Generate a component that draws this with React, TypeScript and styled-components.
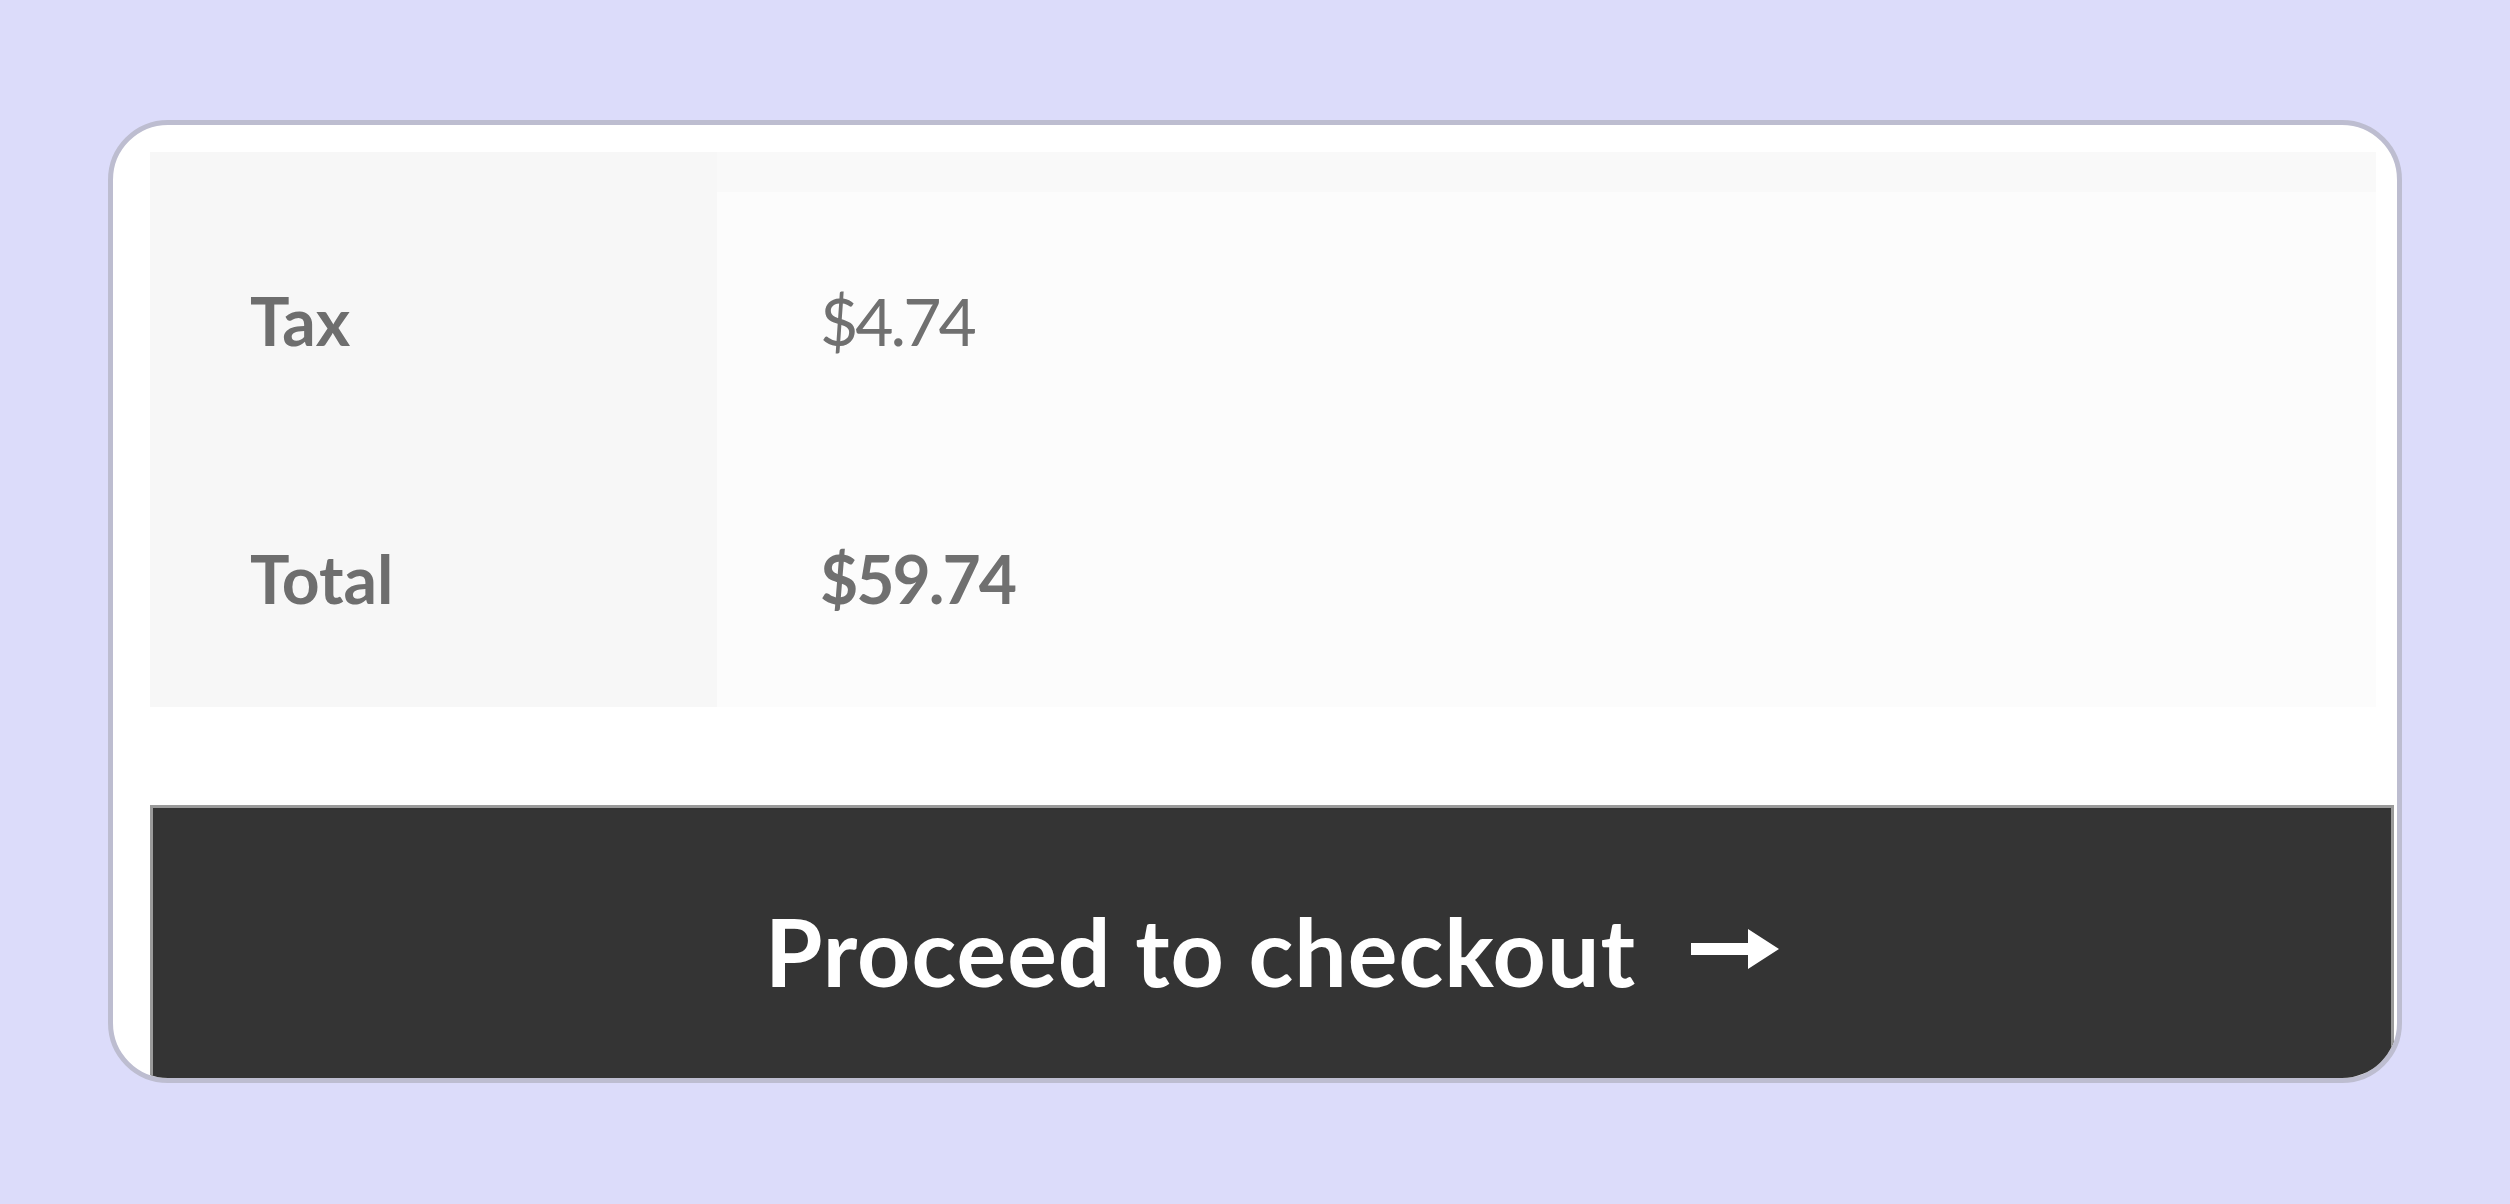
import React from 'react';
import styled, { createGlobalStyle } from 'styled-components';

const GlobalStyle = createGlobalStyle`
  html, body {
    margin: 0;
    padding: 0;
    background: #dcdcfa;
    font-family: Lato, "Open Sans", sans-serif;
  }
`;

const rows = [
  { label: 'Tax', value: '$4.74', strong: false },
  { label: 'Total', value: '$59.74', strong: true }
];

export default function App() {
  return (
    <>
      <GlobalStyle />
      <Page>
        <Card>
          <Totals>
            <TopLabel />
            <TopValue />
            {rows.map((row) => (
              <React.Fragment key={row.label}>
                <Label>{row.label}</Label>
                <Value $strong={row.strong}>{row.value}</Value>
              </React.Fragment>
            ))}
          </Totals>
          <CheckoutButton>
            Proceed to checkout
            <Arrow width="88" height="42" viewBox="0 0 88 42">
              <path d="M0 15 H57 V1 L88 21 L57 41 V27 H0 Z" fill="#fff" />
            </Arrow>
          </CheckoutButton>
        </Card>
      </Page>
    </>
  );
}

const Page = styled.div`
  display: flex;
  justify-content: center;
  padding-top: 120px;
  height: 1204px;
  box-sizing: border-box;
`;

const Card = styled.div`
  width: 2294px;
  height: 963px;
  box-sizing: border-box;
  border: 5px solid #bdbdd0;
  border-radius: 60px;
  background: #fff;
  overflow: hidden;
  padding: 27px 3px 0 37px;
  display: flex;
  flex-direction: column;
`;

const Totals = styled.div`
  display: grid;
  grid-template-columns: 567px 1fr;
  grid-template-rows: 40px 257px 258px;
  margin-right: 18px;
`;

const TopLabel = styled.div`
  background: #f7f7f7;
`;

const TopValue = styled.div`
  background: #f9f9f9;
`;

const Label = styled.div`
  display: flex;
  align-items: center;
  padding-left: 100px;
  background: #f7f7f7;
  color: #6e6e6e;
  font-size: 66px;
  font-weight: 700;
`;

interface ValueProps {
  $strong: boolean;
}

const Value = styled.div<ValueProps>`
  display: flex;
  align-items: center;
  padding-left: 103px;
  background: #fcfcfc;
  color: #707070;
  font-size: 66px;
  font-weight: ${(props) => (props.$strong ? 700 : 400)};
  letter-spacing: ${(props) => (props.$strong ? '-2px' : '-3px')};
`;

const CheckoutButton = styled.div`
  margin-top: 98px;
  flex: none;
  height: 292px;
  box-sizing: border-box;
  border: 3px solid #9a9a9a;
  background: #343434;
  color: #fff;
  display: flex;
  align-items: center;
  justify-content: center;
  gap: 55px;
  font-size: 93px;
  font-weight: 700;
  letter-spacing: 1px;
`;

const Arrow = styled.svg`
  flex: none;
  margin-top: -4px;
`;
